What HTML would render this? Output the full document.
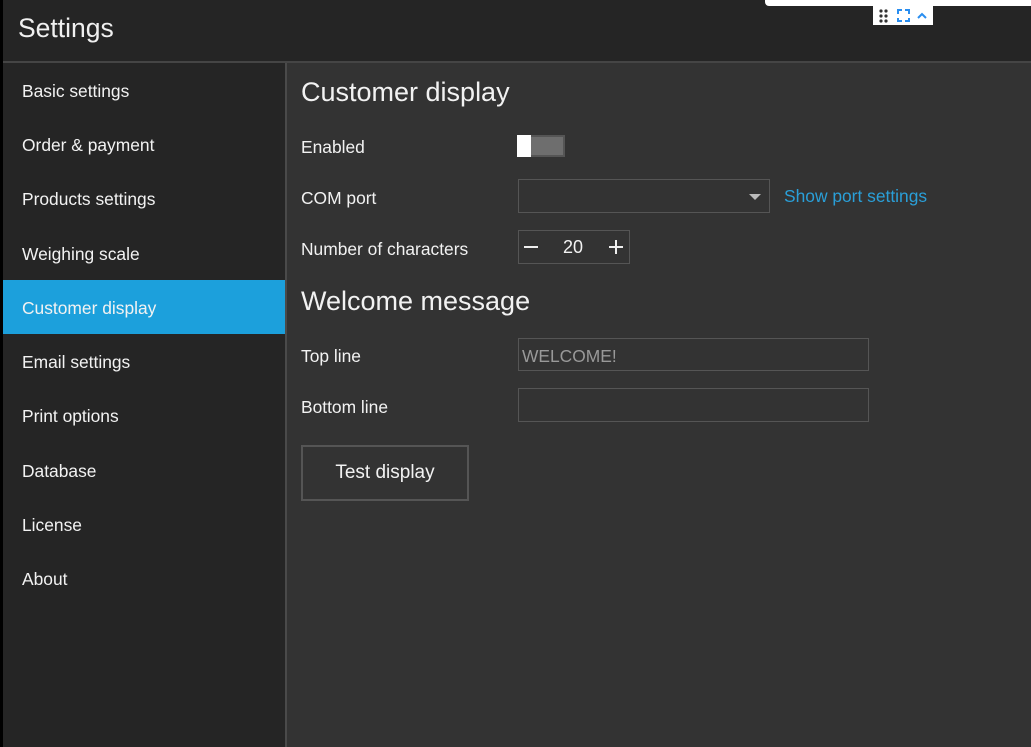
<!DOCTYPE html>
<html><head><style>
*{margin:0;padding:0;box-sizing:border-box}
body{width:1031px;height:747px;background:#333;font-family:"Liberation Sans",sans-serif;color:#f2f2f2;position:relative;overflow:hidden}
.a{position:absolute}
.t{white-space:nowrap}
.s{font-size:17.4px;line-height:22px}
</style></head><body>
<div class="a" style="left:0;top:0;width:1031px;height:61px;background:#252525"></div>
<div class="a" style="left:0;top:61px;width:1031px;height:2px;background:#454545"></div>
<div class="a" style="left:0;top:0;width:3px;height:747px;background:#000"></div>
<div class="a t" style="left:18px;top:13px;font-size:26.5px;color:#f0f0f0">Settings</div>
<div class="a" style="left:765px;top:0;width:266px;height:6px;background:#fff;border-radius:0 0 0 4px"></div>
<div class="a" style="left:873px;top:6px;width:60px;height:19px;background:#fff"></div>
<svg class="a" style="left:873px;top:6px" width="60" height="19">
<g fill="#333"><circle cx="8" cy="5" r="1.6"/><circle cx="13" cy="5" r="1.6"/><circle cx="8" cy="10" r="1.6"/><circle cx="13" cy="10" r="1.6"/><circle cx="8" cy="15" r="1.6"/><circle cx="13" cy="15" r="1.6"/></g>
<path d="M25 8V4h4M32 4h4v4M36 12v3h-4M29 15h-4v-3" stroke="#2a8ef0" stroke-width="2" fill="none"/>
<path d="M45 12l4-4 4 4" stroke="#2a8ef0" stroke-width="2" fill="none"/>
</svg>
<div class="a" style="left:3px;top:63px;width:282px;height:684px;background:#252525"></div>
<div class="a" style="left:285px;top:63px;width:2px;height:684px;background:#4a4a4a"></div>
<div class="a" style="left:3px;top:280px;width:282px;height:54px;background:#1ca0dc"></div>
<div class="a t s" style="left:22px;top:80px">Basic settings</div>
<div class="a t s" style="left:22px;top:134px">Order &amp; payment</div>
<div class="a t s" style="left:22px;top:188px">Products settings</div>
<div class="a t s" style="left:22px;top:243px">Weighing scale</div>
<div class="a t s" style="left:22px;top:297px">Customer display</div>
<div class="a t s" style="left:22px;top:351px">Email settings</div>
<div class="a t s" style="left:22px;top:405px">Print options</div>
<div class="a t s" style="left:22px;top:460px">Database</div>
<div class="a t s" style="left:22px;top:514px">License</div>
<div class="a t s" style="left:22px;top:568px">About</div>

<div class="a t" style="left:301px;top:75px;font-size:27px;line-height:34px">Customer display</div>
<div class="a t s" style="left:301px;top:136px">Enabled</div>
<div class="a" style="left:517px;top:135px;width:48px;height:22px;border:2px solid #555;background:#6e6e6e"></div>
<div class="a" style="left:517px;top:135px;width:14px;height:22px;background:#fff"></div>
<div class="a t s" style="left:301px;top:187px">COM port</div>
<div class="a" style="left:518px;top:179px;width:252px;height:34px;border:1px solid #555"></div>
<svg class="a" style="left:749px;top:193px" width="12" height="8"><path d="M0 1h12L6 7z" fill="#bbb"/></svg>
<div class="a t s" style="left:784px;top:185px;color:#2a9fd8">Show port settings</div>
<div class="a t s" style="left:301px;top:238px">Number of characters</div>
<div class="a" style="left:518px;top:230px;width:112px;height:34px;border:1px solid #555"></div>
<div class="a" style="left:524px;top:246px;width:14px;height:2px;background:#eee"></div>
<div class="a t" style="left:563px;top:236px;font-size:18px;line-height:22px">20</div>
<div class="a" style="left:609px;top:246px;width:14px;height:2px;background:#eee"></div>
<div class="a" style="left:615px;top:240px;width:2px;height:14px;background:#eee"></div>

<div class="a t" style="left:301px;top:284px;font-size:27px;line-height:34px">Welcome message</div>
<div class="a t s" style="left:301px;top:345px">Top line</div>
<div class="a" style="left:518px;top:338px;width:351px;height:33px;border:1px solid #555"></div>
<div class="a t s" style="left:522px;top:345px;color:#999">WELCOME!</div>
<div class="a t s" style="left:301px;top:396px">Bottom line</div>
<div class="a" style="left:518px;top:388px;width:351px;height:34px;border:1px solid #555"></div>
<div class="a" style="left:301px;top:445px;width:168px;height:56px;border:2px solid #555"></div>
<div class="a t" style="left:301px;top:461px;width:168px;text-align:center;font-size:19px;line-height:24px">Test display</div>
</body></html>
